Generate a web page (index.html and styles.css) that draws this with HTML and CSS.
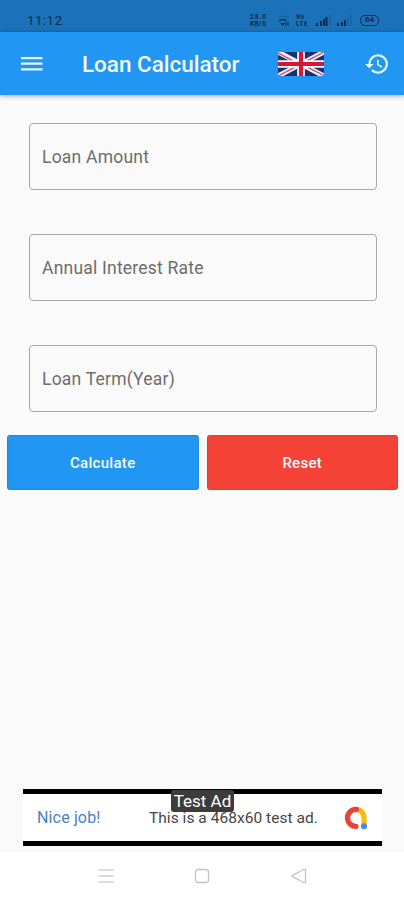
FILE: index.html
```html
<!DOCTYPE html>
<html lang="en">
<head>
<meta charset="utf-8">
<title>Loan Calculator</title>
<link rel="stylesheet" href="styles.css">
</head>
<body>
<div class="screen">
  <div class="status">
    <span class="clock">11:12</span>
    <div class="status-icons">
      <div class="tiny speed"><span>28.0</span><span>KB/S</span></div>
      <svg class="wifi" width="14" height="12" viewBox="0 0 14 12" fill="none" stroke="currentColor"><path d="M1 3Q7-1 13 3" stroke-width="1" opacity=".3"/><path d="M3 5.800Q7 3 10.500 5.800" stroke-width="1.500"/><path d="M5.500 8.500h2L6.500 10zM9.500 7v4M12 7v4" stroke-width="1.200"/></svg>
      <div class="tiny volte"><span>Vo</span><span>LTE</span></div>
      <svg class="sig" width="15" height="12" viewBox="0 0 15 12" fill="currentColor"><path d="M0 8h2v3H0zM4 6h2v5H4zM7 4h2v7H7zM9.500 2h2v9h-2z"/><path d="M13.500 0h1v11h-1z" opacity=".3"/></svg>
      <svg class="sig" width="15" height="12" viewBox="0 0 15 12" fill="currentColor"><path d="M0 8h2v3H0zM4 7h2v4H4zM7 5h2v6H7z"/><path d="M10.500 3h1v8h-1zM13.500 0h1v11h-1z" opacity=".3"/></svg>
      <span class="battery">64</span>
    </div>
  </div>
  <header class="bar">
    <svg class="menu" width="22" height="16" viewBox="0 0 22 16" fill="currentColor"><path d="M0 1h21.500v2.200H0zM0 6.600h21.500v2.200H0zM0 12.300h21.500v2.200H0z"/></svg>
    <h1>Loan Calculator</h1>
    <svg class="flag" width="46" height="24" viewBox="0 0 46 24"><path fill="#173276" d="M0 0h46v24H0z"/><path d="M0 0l46 24M46 0L0 24" stroke="#f4f5fa" stroke-width="5"/><path d="M0 1l21 11M46 0L25 11M46 23.500L25 13M0 24l21-11" stroke="#d3586c" stroke-width="1.500"/><path d="M23 0v24M0 12h46" stroke="#fff" stroke-width="7.600"/><path d="M23 0v24M0 12h46" stroke="#d31735" stroke-width="4.200"/></svg>
    <svg class="history" width="26" height="26" viewBox="0 0 24 24" fill="currentColor"><path d="M13 3a9 9 0 0 0-9 9H1l3.890 3.890.07.14L9 12H6a7 7 0 1 1 2.060 4.940l-1.420 1.420A9 9 0 1 0 13 3zm-1 5v5l4.280 2.540.72-1.210-3.500-2.080V8z"/></svg>
  </header>
  <main>
    <div class="fields">
      <div class="field"><span>Loan Amount</span></div>
      <div class="field"><span>Annual Interest Rate</span></div>
      <div class="field"><span>Loan Term(Year)</span></div>
    </div>
    <div class="actions">
      <button class="calc">Calculate</button>
      <button class="reset">Reset</button>
    </div>
  </main>
  <aside class="ad">
    <span class="nice">Nice job!</span>
    <span class="copy">This is a 468x60 test ad.</span>
    <svg class="admob" width="24" height="24" viewBox="0 0 24 24" fill="none" stroke-linecap="round"><path d="M12 3.300a8 8 0 0 1 8 8v7" stroke="#fbbc04" stroke-width="5.200"/><path d="M12.500 3.300h-.5a8.500 8.500 0 0 0 0 17" stroke="#e8433a" stroke-width="5.200"/><circle cx="20" cy="20.300" r="3" fill="#4285f4"/></svg>
    <span class="tag">Test Ad</span>
  </aside>
  <nav>
    <svg width="16" height="16" viewBox="0 0 16 16" fill="none" stroke="#d0d0d0" stroke-width="1.500"><path d="M.5 2h15M.5 8h15M.5 14h15"/></svg>
    <svg width="16" height="16" viewBox="0 0 16 16" fill="none" stroke="#c3c3c3" stroke-width="1.300"><rect x="1.500" y="1.500" width="13" height="13" rx="2.500"/></svg>
    <svg width="16" height="16" viewBox="0 0 16 16" fill="none" stroke="#c3c3c3" stroke-width="1.300" stroke-linejoin="round"><path d="M1.400 7.300 12.800 1.500q1.700-.6 1.700 1v11q0 1.600-1.700 1L1.400 8.700q-1-.7 0-1.400z"/></svg>
  </nav>
</div>
</body>
</html>
```
FILE: styles.css
```css
* { box-sizing: border-box; }
body { margin: 0; font-family: Roboto, "Liberation Sans", sans-serif; }
svg { display: block; flex: none; }
.screen { width: 404px; height: 900px; display: flex; flex-direction: column; background: #fafafa; overflow: hidden; }
.status { height: 32px; flex: none; display: flex; justify-content: space-between; background: #1b72b8; color: #0b2c50; padding: 0 25px 0 27px; }
.clock { font-size: 13.5px; line-height: 16px; padding-top: 12px; letter-spacing: .35px; }
.status-icons { display: flex; align-items: flex-start; padding-top: 15px; }
.tiny { display: flex; flex-direction: column; margin-top: -1px; font-size: 6.5px; line-height: 7px; font-weight: 700; white-space: nowrap; }
.speed { width: 26px; letter-spacing: 1px; }
.speed span + span { letter-spacing: .4px; }
.wifi { margin-right: 6px; }
.volte { width: 20px; letter-spacing: .5px; }
.sig { margin-right: 6px; }
.sig + .battery { margin-left: 2px; }
.battery { width: 19px; height: 11px; border: 1.5px solid; border-radius: 5px; font-size: 8px; line-height: 8px; text-align: center; font-weight: 700; }
.bar { height: 63px; flex: none; display: flex; align-items: center; background: #2196f3; color: #e9f8ff; padding: 0 14px 0 21px; box-shadow: 0 1px 5px rgba(0,0,0,.35); }
h1 { margin: 0 0 0 39px; width: 196px; font-size: 22.5px; line-height: 28px; font-weight: 500; letter-spacing: -.03px; white-space: nowrap; color: #f2fbff; }
.history { margin-left: auto; }
.fields { display: flex; flex-direction: column; gap: 44px; padding: 28px 27px 0 29px; }
.field { height: 67px; border: 1px solid #a9a9a9; border-radius: 4px; padding-left: 12px; display: flex; align-items: center; font-size: 17.5px; color: #6d6d6d; letter-spacing: .22px; }
.actions { display: grid; grid-template-columns: 1fr 1fr; gap: 8px; padding: 23px 6px 0 7px; }
button { height: 55px; border: 0; border-radius: 3px; padding: 0; color: #f5fbff; font: 500 15px Roboto, "Liberation Sans", sans-serif; letter-spacing: .3px; box-shadow: inset 0 0 1px 1px rgba(0,0,0,.08); }
.calc { background: #2196f3; }
.reset { background: #f44336; }
.ad { position: relative; width: 359px; height: 57px; margin: auto 0 6px 23px; flex: none; display: flex; align-items: center; background: #fff; border: solid #000; border-width: 5px 0; padding: 0 14px; }
.nice { width: 112px; font-size: 16px; letter-spacing: .15px; color: #4a7fcb; }
.copy { font-size: 15.5px; letter-spacing: .04px; color: #454545; white-space: nowrap; }
.admob { margin-left: auto; }
.tag { position: absolute; left: 148px; top: -4px; width: 63px; height: 22px; border-radius: 3px; background: #3c3c3c; color: #fff; font-size: 17px; line-height: 22px; text-align: center; white-space: nowrap; }
nav { height: 48px; flex: none; background: #fff; display: flex; justify-content: center; align-items: center; gap: 80.5px; }
```
